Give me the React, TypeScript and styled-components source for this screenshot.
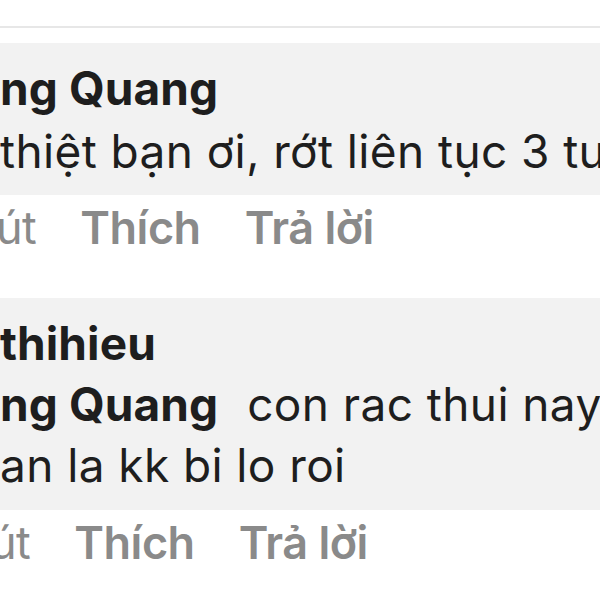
import styled, { createGlobalStyle } from "styled-components";

const GlobalStyle = createGlobalStyle`
  html, body {
    margin: 0;
    padding: 0;
    background: #ffffff;
  }
  body {
    font-family: Inter, "Noto Sans", sans-serif;
    color: #1c1c1e;
  }
`;

const Viewport = styled.div`
  width: 600px;
  height: 600px;
  overflow: hidden;
  background: #ffffff;
  white-space: nowrap;
`;

const Divider = styled.div`
  height: 2px;
  margin-top: 26px;
  background: #e7e7e7;
`;

const Thread = styled.div`
  display: flex;
  flex-direction: column;
  margin-top: 15px;
`;

const Comment = styled.div<{ $gap?: number }>`
  display: flex;
  flex-direction: column;
  margin-top: ${(p) => p.$gap ?? 0}px;
`;

const Bubble = styled.div<{ $lh: number; $top: number; $bottom: number }>`
  margin-left: -20px;
  width: 700px;
  padding: ${(p) => p.$top}px 0 ${(p) => p.$bottom}px 20px;
  background: #f2f2f2;
  font-size: 46px;
  line-height: ${(p) => p.$lh}px;
`;

const Line = styled.div`
  display: block;
`;

const Name = styled.span`
  font-weight: 700;
  letter-spacing: 0.1px;
  color: #1e1e1e;
`;

const Tag = styled(Name)`
  margin-right: 29px;
`;

const Text = styled.span`
  font-weight: 400;
  letter-spacing: 0.4px;
  color: #1e1e1e;
`;

const Actions = styled.div<{ $shift: number }>`
  display: flex;
  gap: 44px;
  margin-top: 3px;
  margin-left: ${(p) => p.$shift}px;
  font-size: 45px;
  line-height: 60px;
  letter-spacing: -0.5px;
  color: #8a8a8a;
`;

const Time = styled.span`
  font-weight: 400;
`;

const Action = styled.span`
  font-weight: 600;
`;

export default function App() {
  return (
    <Viewport>
      <GlobalStyle />
      <Divider />
      <Thread>
        <Comment>
          <Bubble $lh={63} $top={14} $bottom={12}>
            <Line>
              <Name>ng Quang</Name>
            </Line>
            <Line>
              <Text>thiệt bạn ơi, rớt liên tục 3 tuần</Text>
            </Line>
          </Bubble>
          <Actions $shift={-4}>
            <Time>út</Time>
            <Action>Thích</Action>
            <Action>Trả lời</Action>
          </Actions>
        </Comment>
        <Comment $gap={40}>
          <Bubble $lh={61} $top={15} $bottom={14}>
            <Line>
              <Name>thihieu</Name>
            </Line>
            <Line>
              <Tag>ng Quang</Tag>
              <Text>con rac thui nay</Text>
            </Line>
            <Line>
              <Text>an la kk bi lo roi</Text>
            </Line>
          </Bubble>
          <Actions $shift={-10}>
            <Time>út</Time>
            <Action>Thích</Action>
            <Action>Trả lời</Action>
          </Actions>
        </Comment>
      </Thread>
    </Viewport>
  );
}
